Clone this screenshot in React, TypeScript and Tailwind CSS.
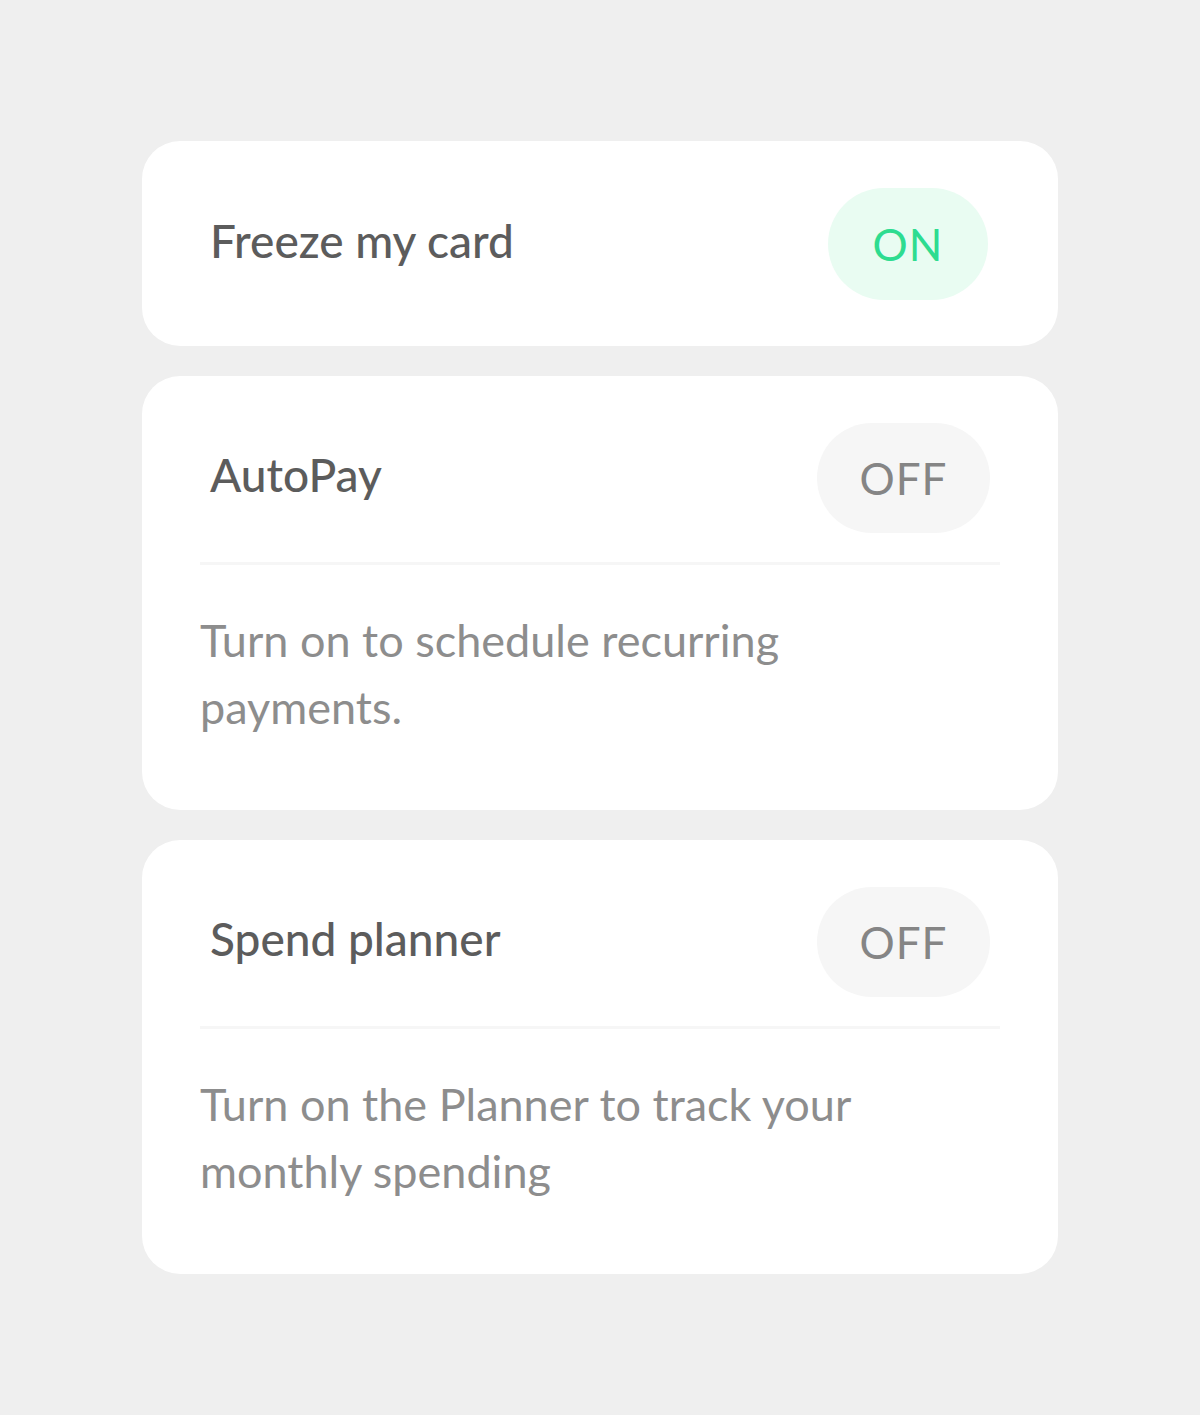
import React from 'react';

interface SettingCardProps {
  title: string;
  on: boolean;
  description?: string;
}

const Pill: React.FC<{ on: boolean }> = ({ on }) =>
  on ? (
    <span className="flex h-[112px] w-[160px] items-center justify-center rounded-full bg-[#e9fcf2] text-[44px] font-normal tracking-[1px] text-[#2edc90]">
      ON
    </span>
  ) : (
    <span className="flex h-[110px] w-[173px] items-center justify-center rounded-full bg-[#f6f6f6] text-[44px] font-normal tracking-[1px] text-[#858585]">
      OFF
    </span>
  );

const SettingCard: React.FC<SettingCardProps> = ({ title, on, description }) => {
  return (
    <div className="rounded-[38px] bg-white px-[58px]">
      <div className={`flex items-center justify-between pt-[47px] ${description ? 'pb-[29px]' : 'pb-[46px]'}`}>
        <h3 className="mb-[8px] pl-[10px] text-[46px] font-medium text-[#5c5c5c]">{title}</h3>
        <div className={on ? 'mr-[12px]' : 'mr-[10px]'}>
          <Pill on={on} />
        </div>
      </div>
      {description && (
        <>
          <div className="h-[3px] bg-[#f6f6f6]" />
          <p className="max-w-[700px] pb-[69px] pt-[42px] text-[45px] font-normal leading-[67px] text-[#8d8d8d]">
            {description}
          </p>
        </>
      )}
    </div>
  );
};

export default function App() {
  return (
    <div
      className="min-h-[1415px] bg-[#efefef] pt-[141px]"
      style={{ fontFamily: 'Lato, "Noto Sans", sans-serif' }}
    >
      <div className="mx-auto flex w-[916px] flex-col gap-[30px]">
        <SettingCard title="Freeze my card" on />
        <SettingCard title="AutoPay" on={false} description="Turn on to schedule recurring payments." />
        <SettingCard
          title="Spend planner"
          on={false}
          description="Turn on the Planner to track your monthly spending"
        />
      </div>
    </div>
  );
}
